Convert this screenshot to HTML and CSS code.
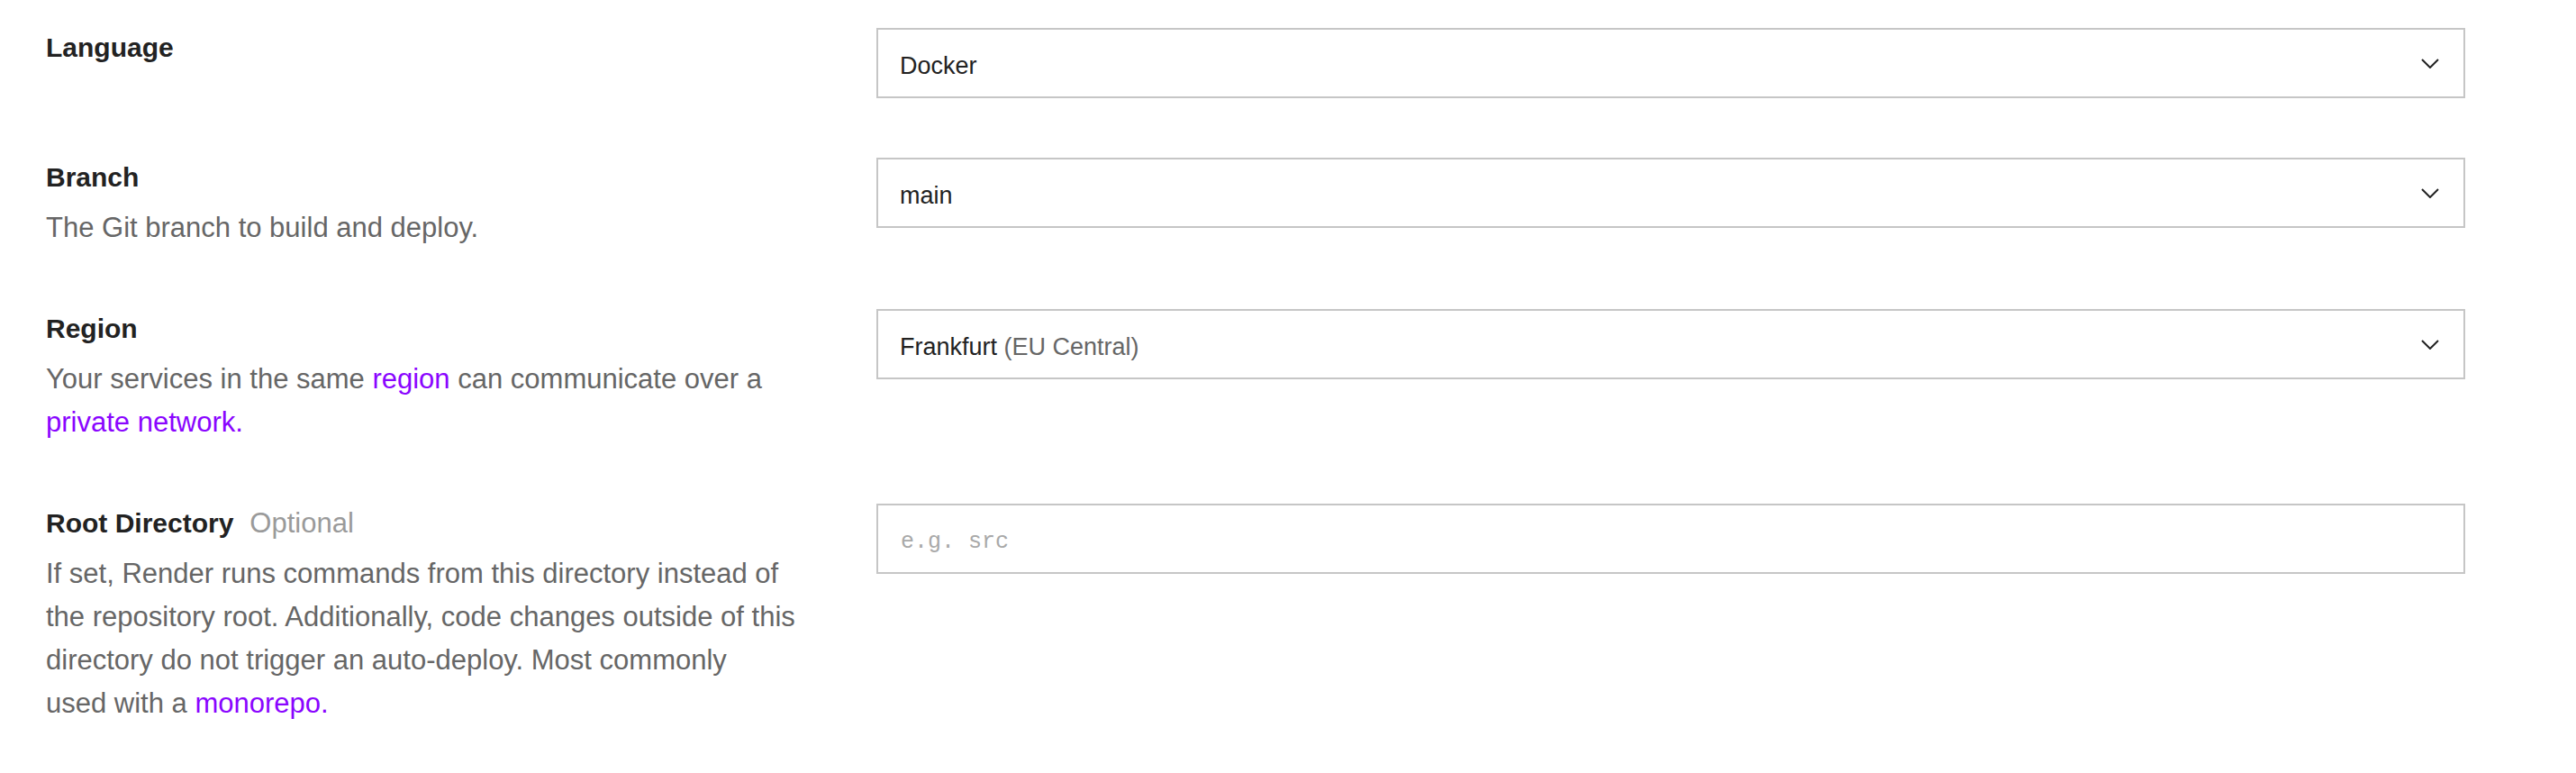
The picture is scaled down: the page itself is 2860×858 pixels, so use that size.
FILE: index.html
```html
<!DOCTYPE html>
<html lang="en">
<head>
<meta charset="utf-8">
<title>Service settings</title>
<link rel="stylesheet" href="styles.css">
</head>
<body>
<div class="form">
  <div class="row">
    <div class="info">
      <div class="label">Language</div>
    </div>
    <div class="control">
      <div class="select">
        <span class="value">Docker</span>
        <svg class="chev" width="20" height="11" viewBox="0 0 20 11"><path d="M1 1 L10 10 L19 1" fill="none" stroke="#222" stroke-width="2"/></svg>
      </div>
    </div>
  </div>

  <div class="row">
    <div class="info">
      <div class="label">Branch</div>
      <p class="desc">The Git branch to build and deploy.</p>
    </div>
    <div class="control">
      <div class="select">
        <span class="value">main</span>
        <svg class="chev" width="20" height="11" viewBox="0 0 20 11"><path d="M1 1 L10 10 L19 1" fill="none" stroke="#222" stroke-width="2"/></svg>
      </div>
    </div>
  </div>

  <div class="row">
    <div class="info">
      <div class="label">Region</div>
      <p class="desc">Your services in the same <a href="#">region</a> can communicate over a <a href="#">private network.</a></p>
    </div>
    <div class="control">
      <div class="select">
        <span class="value">Frankfurt <span class="muted">(EU Central)</span></span>
        <svg class="chev" width="20" height="11" viewBox="0 0 20 11"><path d="M1 1 L10 10 L19 1" fill="none" stroke="#222" stroke-width="2"/></svg>
      </div>
    </div>
  </div>

  <div class="row">
    <div class="info">
      <div class="label">Root Directory<span class="optional">Optional</span></div>
      <p class="desc">If set, Render runs commands from this directory instead of the repository root. Additionally, code changes outside of this directory do not trigger an auto-deploy. Most commonly<br>used with a <a href="#">monorepo.</a></p>
    </div>
    <div class="control">
      <input class="text-input" type="text" placeholder="e.g. src">
    </div>
  </div>
</div>
</body>
</html>
```

FILE: styles.css
```css
html, body {
  margin: 0;
  background: #ffffff;
}

body {
  padding: 31px 123px 0 51px;
  font-family: "Liberation Sans", Arial, Helvetica, sans-serif;
  color: #222222;
}

.form {
  display: flex;
  flex-direction: column;
  gap: 66px;
}

.row {
  display: grid;
  grid-template-columns: 850px 1fr;
  column-gap: 72px;
  align-items: start;
}

.label {
  font-size: 30px;
  font-weight: 700;
  line-height: 44px;
  color: #222222;
}

.optional {
  font-weight: 400;
  font-size: 31px;
  color: #9a9a9a;
  margin-left: 18px;
}

.desc {
  margin: 10px 0 0 0;
  font-size: 31px;
  line-height: 48px;
  color: #666666;
}

.desc a {
  color: #8a05ff;
  text-decoration: none;
}

.select {
  box-sizing: border-box;
  height: 78px;
  border: 2px solid #c6c6c6;
  display: flex;
  align-items: center;
  justify-content: space-between;
  padding: 0 27px 0 24px;
  background: #ffffff;
}

.value {
  font-size: 27px;
  color: #222222;
  padding-top: 6px;
}

.muted {
  color: #666666;
}

.chev {
  display: block;
  flex: none;
}

.text-input {
  box-sizing: border-box;
  display: block;
  width: 100%;
  height: 78px;
  margin: 0;
  border: 2px solid #c6c6c6;
  border-radius: 0;
  padding: 6px 24px 0 25px;
  font-family: "Liberation Mono", "Courier New", monospace;
  font-size: 25px;
  color: #222222;
  background: #ffffff;
  outline: none;
}

.text-input::placeholder {
  color: #a9a9a9;
}
```
